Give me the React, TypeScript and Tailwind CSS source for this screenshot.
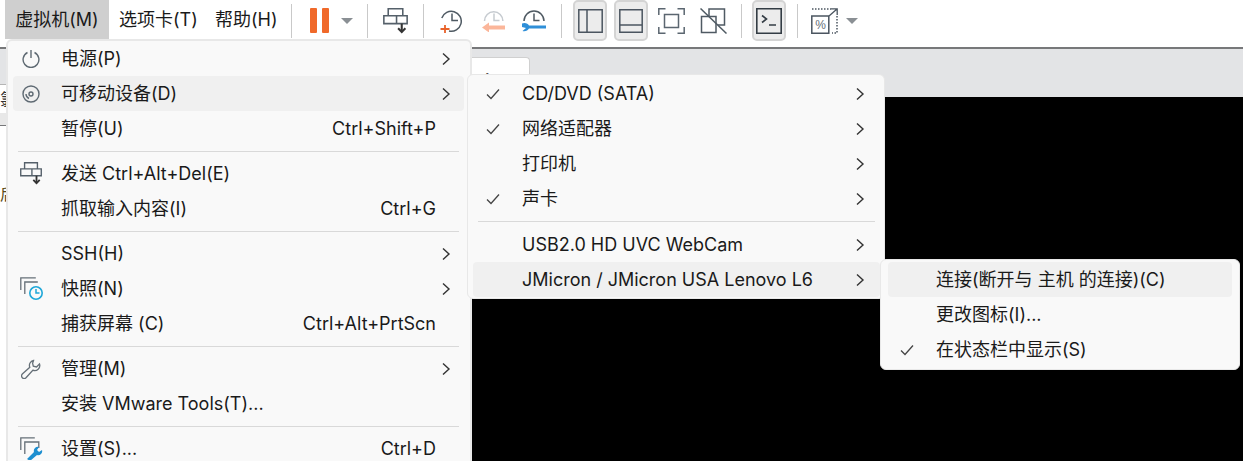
import type { ReactNode } from "react";

function Chevron() {
  return (
    <svg width="10" height="14" viewBox="0 0 10 14" fill="none" stroke="#333" strokeWidth="1.4">
      <path d="M2 1.5 8 7 2 12.5" />
    </svg>
  );
}

function Check() {
  return (
    <svg width="14" height="12" viewBox="0 0 14 12" fill="none" stroke="#444" strokeWidth="1.3">
      <path d="M1 6.5 5 10.5 13 1.5" />
    </svg>
  );
}

function PowerIcon() {
  return (
    <svg width="18" height="18" viewBox="0 0 18 18" fill="none" stroke="#5f6a73" strokeWidth="1.4">
      <path d="M5.500 2.500a7.900 7.900 0 1 0 7 0" />
      <path d="M9 0v8" />
    </svg>
  );
}

function DiscIcon() {
  return (
    <svg width="18" height="18" viewBox="0 0 18 18" fill="none" stroke="#5f6a73" strokeWidth="1.4">
      <circle cx="9" cy="9" r="8" />
      <circle cx="9" cy="9" r="2" />
      <path d="M4 9a5 5 0 0 0 3 4.500" />
    </svg>
  );
}

function SendIcon({ width, height }: { width: number; height: number }) {
  return (
    <svg width={width} height={height} viewBox="0 0 24 25" fill="none" stroke="#55606a" strokeWidth="1.500">
      <path d="M5 7.500V.8h14v6.700" />
      <path d="M.8 7.500h22.400V15H.8z" />
      <path d="M13 7.500V15" />
      <path d="M18 15v8" stroke="#333" strokeWidth="2" />
      <path d="m14.500 19.500 3.500 3.500 3.500-3.500" stroke="#333" strokeWidth="2" />
    </svg>
  );
}

function SnapshotIcon() {
  return (
    <svg width="22" height="23" viewBox="0 0 22 23" fill="none">
      <path d="M1.800 8a10 10 0 1 1 7.200 13" stroke="#4f5a63" strokeWidth="1.500" />
      <path d="M12 3.500v7h6" stroke="#4f5a63" strokeWidth="1.500" />
      <path d="M5 15v8M.5 19h9" stroke="#e8622a" strokeWidth="1.800" />
    </svg>
  );
}

function RevertIcon() {
  return (
    <svg width="23" height="22" viewBox="0 0 23 22" fill="none">
      <path d="M2.500 11a9.200 9.200 0 1 1 18.400 0" stroke="#c6cbd0" strokeWidth="1.500" />
      <path d="M12 3.500v7h5.500" stroke="#c6cbd0" strokeWidth="1.500" />
      <path d="M23 17.500H5" stroke="#fbb69a" strokeWidth="4" />
      <path d="M7 12.500 0 17.500l7 5z" fill="#fbb69a" />
    </svg>
  );
}

function ManageSnapshotIcon() {
  return (
    <svg width="24" height="22" viewBox="0 0 24 22" fill="none">
      <path d="M2 11a10 10 0 0 1 20 0" stroke="#4f5a63" strokeWidth="1.500" />
      <path d="M12 3.500v7h5.500" stroke="#4f5a63" strokeWidth="1.500" />
      <path d="M0 13.500c3-1.500 6 0 7 2h17v3H7c-1 2-4 3.500-6.500 2.500l3.500-3-4-1z" fill="#2f8fd8" />
    </svg>
  );
}

function LeftPaneIcon() {
  return (
    <svg width="25" height="24" viewBox="0 0 25 24" fill="none" stroke="#4b5560" strokeWidth="1.500">
      <path d="M.8.800h23.400v22.400H.8zM9 .8v22.400" />
    </svg>
  );
}

function BottomPaneIcon() {
  return (
    <svg width="24" height="24" viewBox="0 0 24 24" fill="none" stroke="#4b5560" strokeWidth="1.500">
      <path d="M.8.800h22.400v22.400H.8zM.8 16h22.400" />
    </svg>
  );
}

function FullscreenIcon() {
  return (
    <svg width="27" height="26" viewBox="0 0 27 26" fill="none" stroke="#5b6670" strokeWidth="1.500">
      <path d="M.8 7V.8h6.700M19.500.8h6.700V7M26.200 19v6.200h-6.700M7.500 25.200H.8V19" />
      <path d="M6.500 6.500h14v13h-14z" />
    </svg>
  );
}

function UnityIcon() {
  return (
    <svg width="27" height="26" viewBox="0 0 27 26" fill="none" stroke="#4f5a63" strokeWidth="1.500">
      <path d="M9 8V1h15.500v16H18M1.500 8.500H16v16H1.500z" />
      <path d="M.5.500l26 25" />
    </svg>
  );
}

function ConsoleIcon() {
  return (
    <svg width="26" height="26" viewBox="0 0 26 26" fill="none" stroke="#333c44" strokeWidth="1.600">
      <path d="M.8.800h24.400v24.400H.8z" />
      <path d="m6 7.500 4.500 3.500L6 14.500M13 17h7" />
    </svg>
  );
}

function StretchIcon() {
  return (
    <svg width="27" height="26" viewBox="0 0 27 26" fill="none">
      <path d="M.8 8h17v17.200H.8z" stroke="#4b5560" strokeWidth="1.500" />
      <path d="M1 1h19M26 8v17h-5" stroke="#4b5560" strokeWidth="1.500" strokeDasharray="1.500 1.500" />
      <path d="m18 8 8-7M20 .8h6.200V7" stroke="#4b5560" strokeWidth="1.300" />
      <text x="9.500" y="21" fontSize="12" fill="#667078" textAnchor="middle" fontFamily="Liberation Sans">%</text>
    </svg>
  );
}

function ClockWindowsIcon() {
  return (
    <svg width="23" height="23" viewBox="0 0 23 23" fill="none">
      <path d="M.8 13V.8h15M4.800 17V5h13" stroke="#667078" strokeWidth="1.300" />
      <circle cx="16" cy="16" r="6.200" stroke="#1ea7d8" strokeWidth="1.600" />
      <path d="M16 12v4h3.500" stroke="#1ea7d8" strokeWidth="1.500" />
    </svg>
  );
}

function WrenchIcon() {
  return (
    <svg width="20" height="20" viewBox="0 0 20 20" fill="none" stroke="#667078" strokeWidth="1.300">
      <path d="M12.500 1.500a5 5 0 0 0-3.700 6.800L1.300 15a2.600 2.600 0 0 0 3.700 3.700l6.800-7.500a5 5 0 0 0 6.700-6.200l-3 3-3.200-.8-.7-3z" />
    </svg>
  );
}

function SettingsIcon() {
  return (
    <svg width="23" height="23" viewBox="0 0 23 23" fill="none">
      <path d="M.8 13V.8h14M4.800 17V5h14v6" stroke="#667078" strokeWidth="1.300" />
      <path d="M7 22l7-7a4 4 0 0 1 5-5l-2 3 2 2 3-2a4 4 0 0 1-5 5l-7 6z" fill="#1e8fd0" />
    </svg>
  );
}

function Caret() {
  return <span className="block h-0 w-0 border-x-[6px] border-t-[6px] border-x-transparent border-t-[#8a8f94]" />;
}

function Divider({ className }: { className: string }) {
  return <span className={`mt-[2px] h-[34px] w-px bg-[#c9c9c9] ${className}`} />;
}

function ToggleButton({ children, className }: { children: ReactNode; className: string }) {
  return (
    <span className={`mt-[2px] flex h-[41px] w-[34px] items-center justify-center rounded-[5px] border-2 border-[#d4d4d4] bg-[#ececec] ${className}`}>
      {children}
    </span>
  );
}

function Toolbar() {
  return (
    <div className="flex h-[49px] items-center border-b-2 border-[#77787a] bg-white pb-[8px] text-[18px] whitespace-nowrap text-[#1a1a1a]">
      <div className="ml-[5px] flex h-[39px] w-[104px] items-center justify-center bg-[#cfcfcf]">虚拟机(M)</div>
      <span className="ml-[10px] w-[76px]">选项卡(T)</span>
      <span className="ml-[20px] w-[62px]">帮助(H)</span>
      <Divider className="ml-[14px]" />
      <span className="ml-[18px] mt-[2px] h-[25px] w-[7px] rounded-[1px] bg-[#f0692a]" />
      <span className="ml-[5px] mt-[2px] h-[25px] w-[7px] rounded-[1px] bg-[#f0692a]" />
      <span className="ml-[12px] mt-[2px] flex">
        <Caret />
      </span>
      <Divider className="ml-[14px]" />
      <span className="ml-[15px] mt-[2px] flex">
        <SendIcon width={25} height={26} />
      </span>
      <Divider className="ml-[15px]" />
      <span className="ml-[16px] mt-[3px] flex">
        <SnapshotIcon />
      </span>
      <span className="ml-[20px] mt-[3px] flex">
        <RevertIcon />
      </span>
      <span className="ml-[17px] mt-[3px] flex">
        <ManageSnapshotIcon />
      </span>
      <Divider className="ml-[15px]" />
      <ToggleButton className="ml-[11px]">
        <LeftPaneIcon />
      </ToggleButton>
      <ToggleButton className="ml-[7px]">
        <BottomPaneIcon />
      </ToggleButton>
      <span className="ml-[10px] mt-[2px] flex">
        <FullscreenIcon />
      </span>
      <span className="ml-[15px] mt-[2px] flex">
        <UnityIcon />
      </span>
      <Divider className="ml-[14px]" />
      <ToggleButton className="ml-[10px]">
        <ConsoleIcon />
      </ToggleButton>
      <Divider className="ml-[11px]" />
      <span className="ml-[13px] mt-[2px] flex">
        <StretchIcon />
      </span>
      <span className="ml-[8px] mt-[2px] flex">
        <Caret />
      </span>
    </div>
  );
}

interface RowProps {
  icon?: ReactNode;
  label: string;
  shortcut?: string;
  arrow?: boolean;
  active?: boolean;
}

function MainRow({ icon, label, shortcut, arrow, active }: RowProps) {
  return (
    <div className={`flex h-[35px] items-center rounded-[4px] pr-[13px] ${active ? "bg-[#f0f0f0]" : ""}`}>
      <span className="flex w-[48px] justify-center pr-[12px]">{icon}</span>
      <span>{label}</span>
      {shortcut && <span className="ml-auto mr-[15px]">{shortcut}</span>}
      {arrow && (
        <span className="ml-auto flex">
          <Chevron />
        </span>
      )}
    </div>
  );
}

function SubRow({ label, checked, arrow, active, pad }: { label: string; checked?: boolean; arrow?: boolean; active?: boolean; pad: string }) {
  return (
    <div className={`flex h-[35px] items-center rounded-[4px] pr-[15px] ${active ? "bg-[#f0f0f0]" : ""} ${pad}`}>
      <span className="flex w-[48px] justify-start pl-[12px]">{checked && <Check />}</span>
      <span>{label}</span>
      {arrow && (
        <span className="ml-auto flex">
          <Chevron />
        </span>
      )}
    </div>
  );
}

function Sep({ tall }: { tall?: boolean }) {
  return <div className={`mx-[5px] h-px bg-[#d9d9d9] ${tall ? "mb-[5px] mt-[5px]" : "my-[4.500px]"}`} />;
}

// only the first pixels of these glyphs show, the open menu lies over the rest
function LeftSliver() {
  return (
    <div className="absolute left-0 top-[49px] flex h-[412px] w-[6px] flex-col bg-white text-[16px] leading-[18px] text-[#333]">
      <div className="h-[35px] bg-[#e3e4e6]" />
      <div className="h-px bg-[#b5b5b5]" />
      <div className="flex h-[28px] items-center whitespace-nowrap">氯</div>
      <div className="h-[12px] bg-[#e8e8e8]" />
      <div className="h-px bg-[#77787a]" />
      <div className="mt-[59px] whitespace-nowrap text-[#5a4a20]">后</div>
    </div>
  );
}

export default function App() {
  return (
    <div className="relative h-[461px] w-[1243px] overflow-hidden bg-black font-['Inter','Noto_Sans_CJK_SC',sans-serif]">
      <Toolbar />
      <div className="flex h-[48px] items-end bg-[#e3e4e6]">
        <div className="ml-[440px] flex h-[40px] w-[90px] items-start justify-end rounded-t-[4px] border border-b-0 border-[#d0d0d0] bg-white pr-[8px] pt-[12px]">
          <span className="mr-[20px] text-[14px] leading-[18px] font-bold text-[#222]">)</span>
          <svg className="mt-[4px]" width="10" height="10" viewBox="0 0 10 10" fill="none" stroke="#c4c4c4" strokeWidth="1.300">
            <path d="m1 1 8 8M9 1 1 9" />
          </svg>
        </div>
      </div>
      <LeftSliver />

      <div className="absolute left-[6px] top-[39px] h-[440px] w-[466px] rounded-[6px] border-2 border-[#e8e8e8] bg-[#f9f9f9] pl-[5px] pr-[6px] text-[18px] text-[#1a1a1a]">
        <MainRow icon={<PowerIcon />} label="电源(P)" arrow />
        <MainRow icon={<DiscIcon />} label="可移动设备(D)" arrow active />
        <MainRow label="暂停(U)" shortcut="Ctrl+Shift+P" />
        <Sep />
        <MainRow icon={<SendIcon width={22} height={23} />} label="发送 Ctrl+Alt+Del(E)" />
        <MainRow label="抓取输入内容(I)" shortcut="Ctrl+G" />
        <Sep />
        <MainRow label="SSH(H)" arrow />
        <MainRow icon={<ClockWindowsIcon />} label="快照(N)" arrow />
        <MainRow label="捕获屏幕 (C)" shortcut="Ctrl+Alt+PrtScn" />
        <Sep />
        <MainRow icon={<WrenchIcon />} label="管理(M)" arrow />
        <MainRow label="安装 VMware Tools(T)..." />
        <Sep />
        <MainRow icon={<SettingsIcon />} label="设置(S)..." shortcut="Ctrl+D" />
      </div>

      <div className="absolute left-[467px] top-[74px] w-[418px] rounded-[6px] border border-[#e8e8e8] bg-[#f9f9f9] pb-[1px] pl-[5px] pr-[4px] pt-[1px] text-[18px] text-[#1a1a1a]">
        <SubRow pad="pl-[1px]" label="CD/DVD (SATA)" checked arrow />
        <SubRow pad="pl-[1px]" label="网络适配器" checked arrow />
        <SubRow pad="pl-[1px]" label="打印机" arrow />
        <SubRow pad="pl-[1px]" label="声卡" checked arrow />
        <Sep tall />
        <SubRow pad="pl-[1px]" label="USB2.0 HD UVC WebCam" arrow />
        <SubRow pad="pl-[1px]" label="JMicron / JMicron USA Lenovo L6" arrow active />
      </div>

      <div className="absolute left-[880px] top-[259px] w-[360px] rounded-[6px] border border-[#e8e8e8] bg-[#f9f9f9] px-[7px] py-[2px] text-[18px] text-[#1a1a1a]">
        <SubRow pad="pl-[0px]" label="连接(断开与 主机 的连接)(C)" active />
        <SubRow pad="pl-[0px]" label="更改图标(I)..." />
        <SubRow pad="pl-[0px]" label="在状态栏中显示(S)" checked />
      </div>
    </div>
  );
}
